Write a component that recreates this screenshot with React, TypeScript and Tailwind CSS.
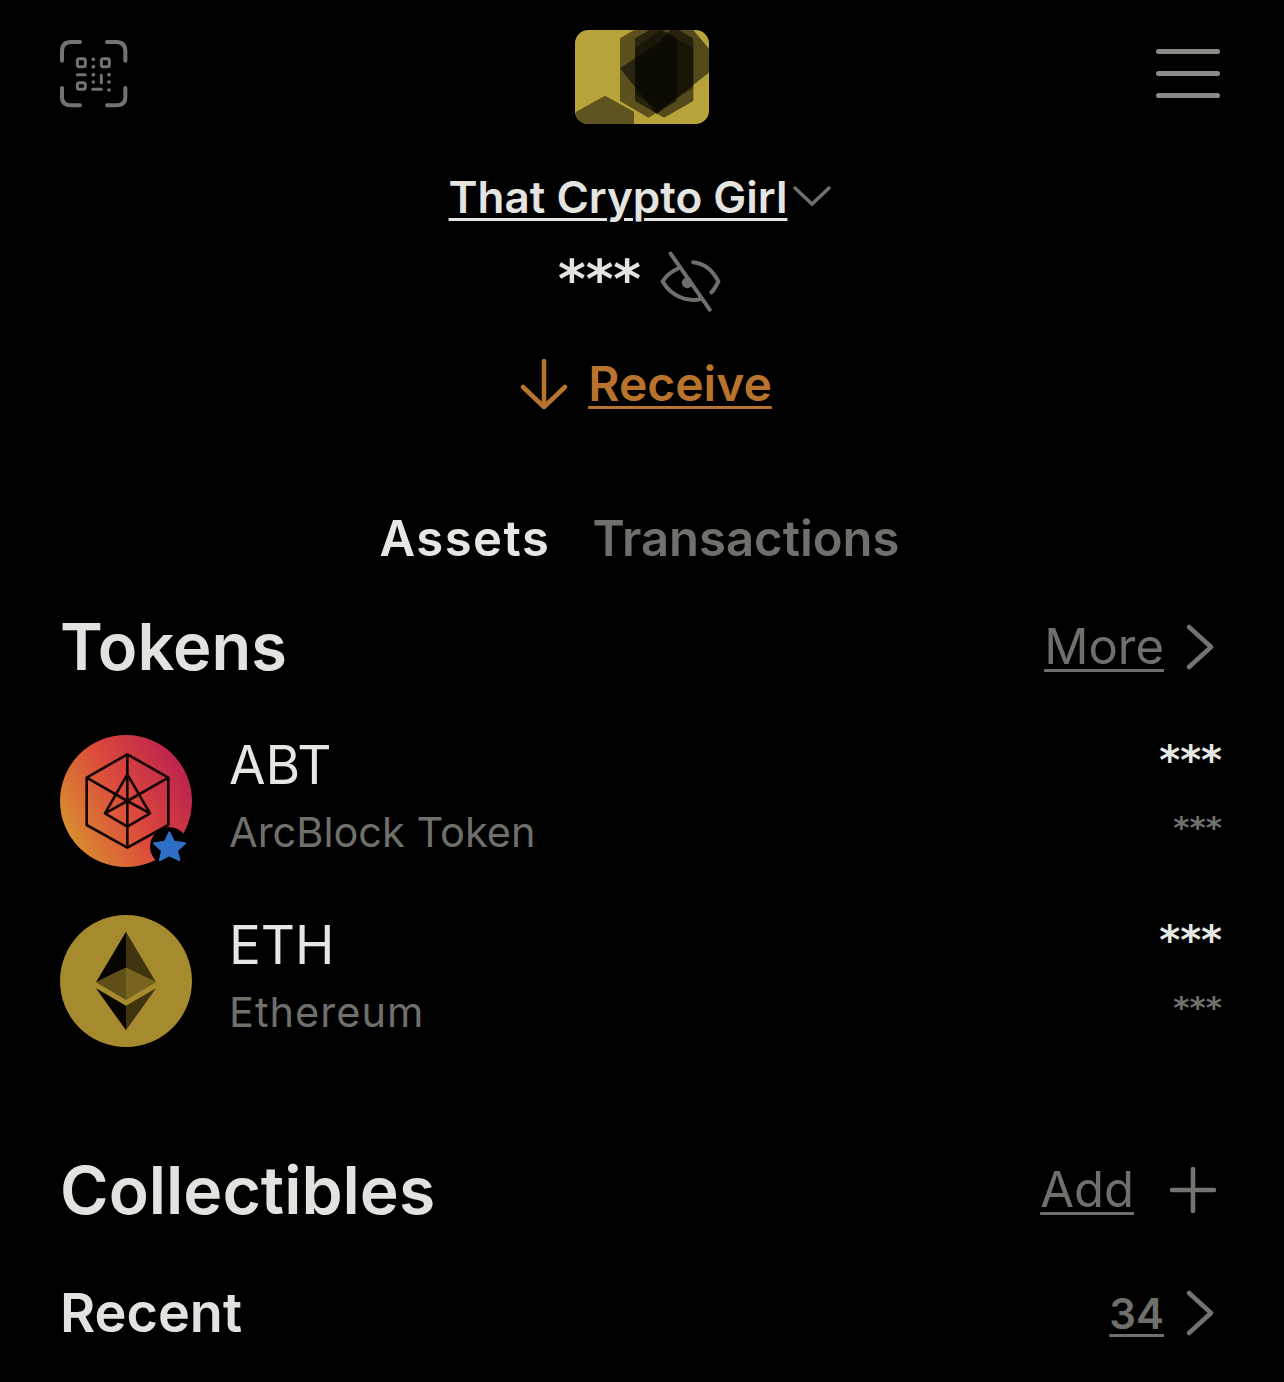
import React from "react";

const F = { fontFamily: '"Inter","Lato","Noto Sans",sans-serif' };
const STAR = { fontFamily: '"DejaVu Sans",sans-serif' };

function QrIcon() {
  return (
    <svg viewBox="90 90 204 204" className="w-[68px] h-[68px] mt-[10px]" fill="none" stroke="#73736f" strokeWidth="12" strokeLinecap="round">
      <path d="M96 152V124Q96 96 124 96H150" />
      <path d="M231 96H258Q286 96 286 124V152" />
      <path d="M96 234V262Q96 286 124 286H150" />
      <path d="M286 234V262Q286 286 258 286H231" />
      <rect x="142" y="146" width="24" height="24" rx="6" strokeWidth="9" />
      <rect x="214" y="146" width="24" height="24" rx="6" strokeWidth="9" />
      <rect x="142" y="218" width="24" height="20" rx="6" strokeWidth="9" />
      <path d="M142 194H166M188 238H214M214 196V218" strokeWidth="9" />
      <g fill="#73736f" stroke="none">
        <circle cx="190" cy="148" r="5.5" /><circle cx="190" cy="170" r="5.5" /><circle cx="190" cy="194" r="5.5" />
        <circle cx="190" cy="216" r="5.5" /><circle cx="237" cy="194" r="5.5" /><circle cx="237" cy="216" r="5.5" /><circle cx="237" cy="240" r="5.5" />
      </g>
    </svg>
  );
}

function Logo() {
  return (
    <svg viewBox="45 45 402 282" className="w-[134px] h-[94px]">
      <defs><clipPath id="lg"><rect x="45" y="45" width="402" height="282" rx="40" /></clipPath></defs>
      <g clipPath="url(#lg)">
        <rect x="45" y="45" width="402" height="282" fill="#b8a33a" />
        <polygon points="48,290 135,242 222,290 222,330 48,330" fill="#5f5420" />
        <polygon points="265,20 350,70 350,258 265,308 180,258 180,70" fill="#000" fillOpacity=".5" />
        <polygon points="312,20 400,70 400,258 312,308 225,258 225,70" fill="#000" fillOpacity=".55" />
        <polygon points="180,160 300,80 330,45 400,45 450,105 450,170 290,298" fill="#000" fillOpacity=".55" />
        <polygon points="300,45 400,100 400,220 300,280 225,240 225,100" fill="#000" fillOpacity=".35" />
      </g>
    </svg>
  );
}

function Menu() {
  return (
    <div className="flex flex-col gap-[17px] w-[64px] mt-[19px]">
      <div className="h-[5px] rounded-full bg-[#8a8a86]" />
      <div className="h-[5px] rounded-full bg-[#8a8a86]" />
      <div className="h-[5px] rounded-full bg-[#8a8a86]" />
    </div>
  );
}

function Eye() {
  return (
    <svg viewBox="685 255 190 190" className="w-[63px] h-[63px]" fill="none" stroke="#6f6f6b" strokeWidth="12" strokeLinecap="round">
      <path d="M720 266L838 435" />
      <path d="M788 292C825 296 850 322 864 350C858 362 852 374 843 383" />
      <path d="M744 310C722 320 705 334 696 350C720 392 770 415 812 402" />
      <circle cx="770" cy="354" r="16" fill="#6f6f6b" stroke="none" />
    </svg>
  );
}

function Abt() {
  return (
    <div className="relative w-[132px] h-[132px] shrink-0">
      <svg viewBox="30 30 396 396" className="w-full h-full">
        <defs>
          <linearGradient id="ag" x1="0" y1=".8" x2="1" y2=".25">
            <stop offset="0" stopColor="#d8962d" />
            <stop offset=".5" stopColor="#dc4a3c" />
            <stop offset="1" stopColor="#b81f4e" />
          </linearGradient>
        </defs>
        <circle cx="228" cy="228" r="198" fill="url(#ag)" />
        <g fill="none" stroke="#160505" strokeWidth="8" strokeLinejoin="round">
          <polygon points="232,88 355,158 355,300 232,368 110,300 110,158" />
          <path d="M232 88V368M110 158L232 228L355 158" />
          <polygon points="232,148 300,265 232,305 165,265" />
          <path d="M165 265L232 228L300 265" />
        </g>
        <circle cx="358" cy="365" r="58" fill="#000" />
        <polygon points="358,322 372,350 405,355 381,377 388,405 358,391 330,405 336,377 312,355 345,350" fill="#2d6fc4" stroke="#2d6fc4" strokeWidth="6" strokeLinejoin="round" />
      </svg>
    </div>
  );
}

function Eth() {
  return (
    <svg viewBox="30 30 396 396" className="w-[132px] h-[132px] shrink-0">
      <circle cx="228" cy="228" r="198" fill="#a68a2e" />
      <polygon points="228,80 138,232 228,188" fill="#050400" />
      <polygon points="228,80 318,232 228,188" fill="#3f340e" />
      <polygon points="138,232 228,188 228,285" fill="#5f5019" />
      <polygon points="318,232 228,188 228,285" fill="#77641e" />
      <polygon points="138,250 228,302 228,376" fill="#050400" />
      <polygon points="318,250 228,302 228,376" fill="#3f340e" />
    </svg>
  );
}

function Chevron({ className }: { className: string }) {
  return (
    <svg viewBox="0 0 28 46" className={className} fill="none" stroke="#73736f" strokeWidth="4.5" strokeLinecap="round" strokeLinejoin="round">
      <path d="M3 3L25 23L3 43" />
    </svg>
  );
}

function TokenRow({ icon, sym, name, nameClass }: { icon: React.ReactNode; sym: string; name: string; nameClass?: string }) {
  return (
    <div className="flex items-start h-[132px]">
      {icon}
      <div className="ml-[37px] flex-1">
        <div className="text-[53px] leading-[60px] text-[#e6e6e3] font-normal">{sym}</div>
        <div className={`text-[41.5px] leading-[48px] mt-[13px] text-[#6f6f6b] ${nameClass ?? ""}`}>{name}</div>
      </div>
      <div style={STAR} className="flex flex-col items-end -mr-[2px]">
        <div className="text-[40px] leading-[44px] font-bold text-[#e6e6e3] mt-[3px]">***</div>
        <div className="text-[31px] leading-[40px] mt-[25px] font-bold text-[#6f6f6b]">***</div>
      </div>
    </div>
  );
}

export default function App() {
  return (
    <div style={F} className="w-[1284px] h-[1382px] bg-black overflow-hidden pl-[60px] pr-[64px] pt-[30px]">
      <header className="flex items-start justify-between h-[94px]">
        <QrIcon />
        <Logo />
        <Menu />
      </header>

      <div className="mt-[50px] flex items-center justify-center h-[46px] pl-[1px]">
        <span className="text-[44px] leading-[46px] font-semibold text-[#e4e4e1] underline decoration-[3px] underline-offset-[5px]">That Crypto Girl</span>
        <svg viewBox="0 0 40 22" className="w-[40px] h-[22px] ml-[5px] -mt-[2px]" fill="none" stroke="#6f6f6b" strokeWidth="3.5" strokeLinecap="round"><path d="M3 3L20 19L37 3" /></svg>
      </div>

      <div className="mt-[29px] flex items-center justify-center h-[64px]">
        <span style={STAR} className="text-[53px] leading-[50px] font-bold text-[#e4e4e1] -mt-[2px]">***</span>
        <span className="ml-[18px]"><Eye /></span>
      </div>

      <div className="mt-[44px] flex items-center justify-center h-[54px] pl-[12px]">
        <svg viewBox="0 0 48 52" className="w-[48px] h-[52px]" fill="none" stroke="#b8742c" strokeWidth="4.5" strokeLinecap="round" strokeLinejoin="round"><path d="M24 3V49M3 29L24 49L45 29" /></svg>
        <span className="ml-[20px] text-[48px] leading-[54px] font-semibold text-[#b8742c] underline decoration-[3px] underline-offset-[5px]">Receive</span>
      </div>

      <div className="mt-[98px] flex items-center justify-center gap-[42px] h-[60px] pr-[1px]">
        <span className="text-[49px] font-semibold tracking-[1.5px] text-[#e6e6e3]">Assets</span>
        <span className="text-[49px] font-semibold text-[#6f6f6b]">Transactions</span>
      </div>

      <div className="mt-[48px] flex items-center justify-between h-[60px]">
        <span className="text-[65px] leading-[60px] font-semibold text-[#e2e2df]">Tokens</span>
        <div className="flex items-center pr-[6px]">
          <span className="text-[49px] text-[#6f6f6b] underline decoration-[3px] underline-offset-[5px]">More</span>
          <span className="ml-[22px]"><Chevron className="w-[28px] h-[46px]" /></span>
        </div>
      </div>

      <div className="mt-[58px] flex flex-col gap-[48px]">
        <TokenRow icon={<Abt />} sym="ABT" name="ArcBlock Token" />
        <TokenRow icon={<Eth />} sym="ETH" name="Ethereum" nameClass="tracking-[1px]" />
      </div>

      <div className="mt-[113px] flex items-center justify-between h-[60px]">
        <span className="text-[66px] leading-[60px] font-semibold text-[#e2e2df]">Collectibles</span>
        <div className="flex items-center pr-[4px]">
          <span className="text-[49px] text-[#6f6f6b] underline decoration-[3px] underline-offset-[5px]">Add</span>
          <svg viewBox="0 0 46 46" className="w-[46px] h-[46px] ml-[36px]" fill="none" stroke="#73736f" strokeWidth="4.5" strokeLinecap="round"><path d="M23 2V44M2 23H44" /></svg>
        </div>
      </div>

      <div className="mt-[63px] flex items-center justify-between h-[60px]">
        <span className="text-[54px] leading-[60px] font-semibold text-[#e2e2df]">Recent</span>
        <div className="flex items-center pr-[6px]">
          <span className="text-[42px] font-semibold text-[#6f6f6b] underline decoration-[3px] underline-offset-[5px]">34</span>
          <span className="ml-[22px]"><Chevron className="w-[28px] h-[46px]" /></span>
        </div>
      </div>
    </div>
  );
}
